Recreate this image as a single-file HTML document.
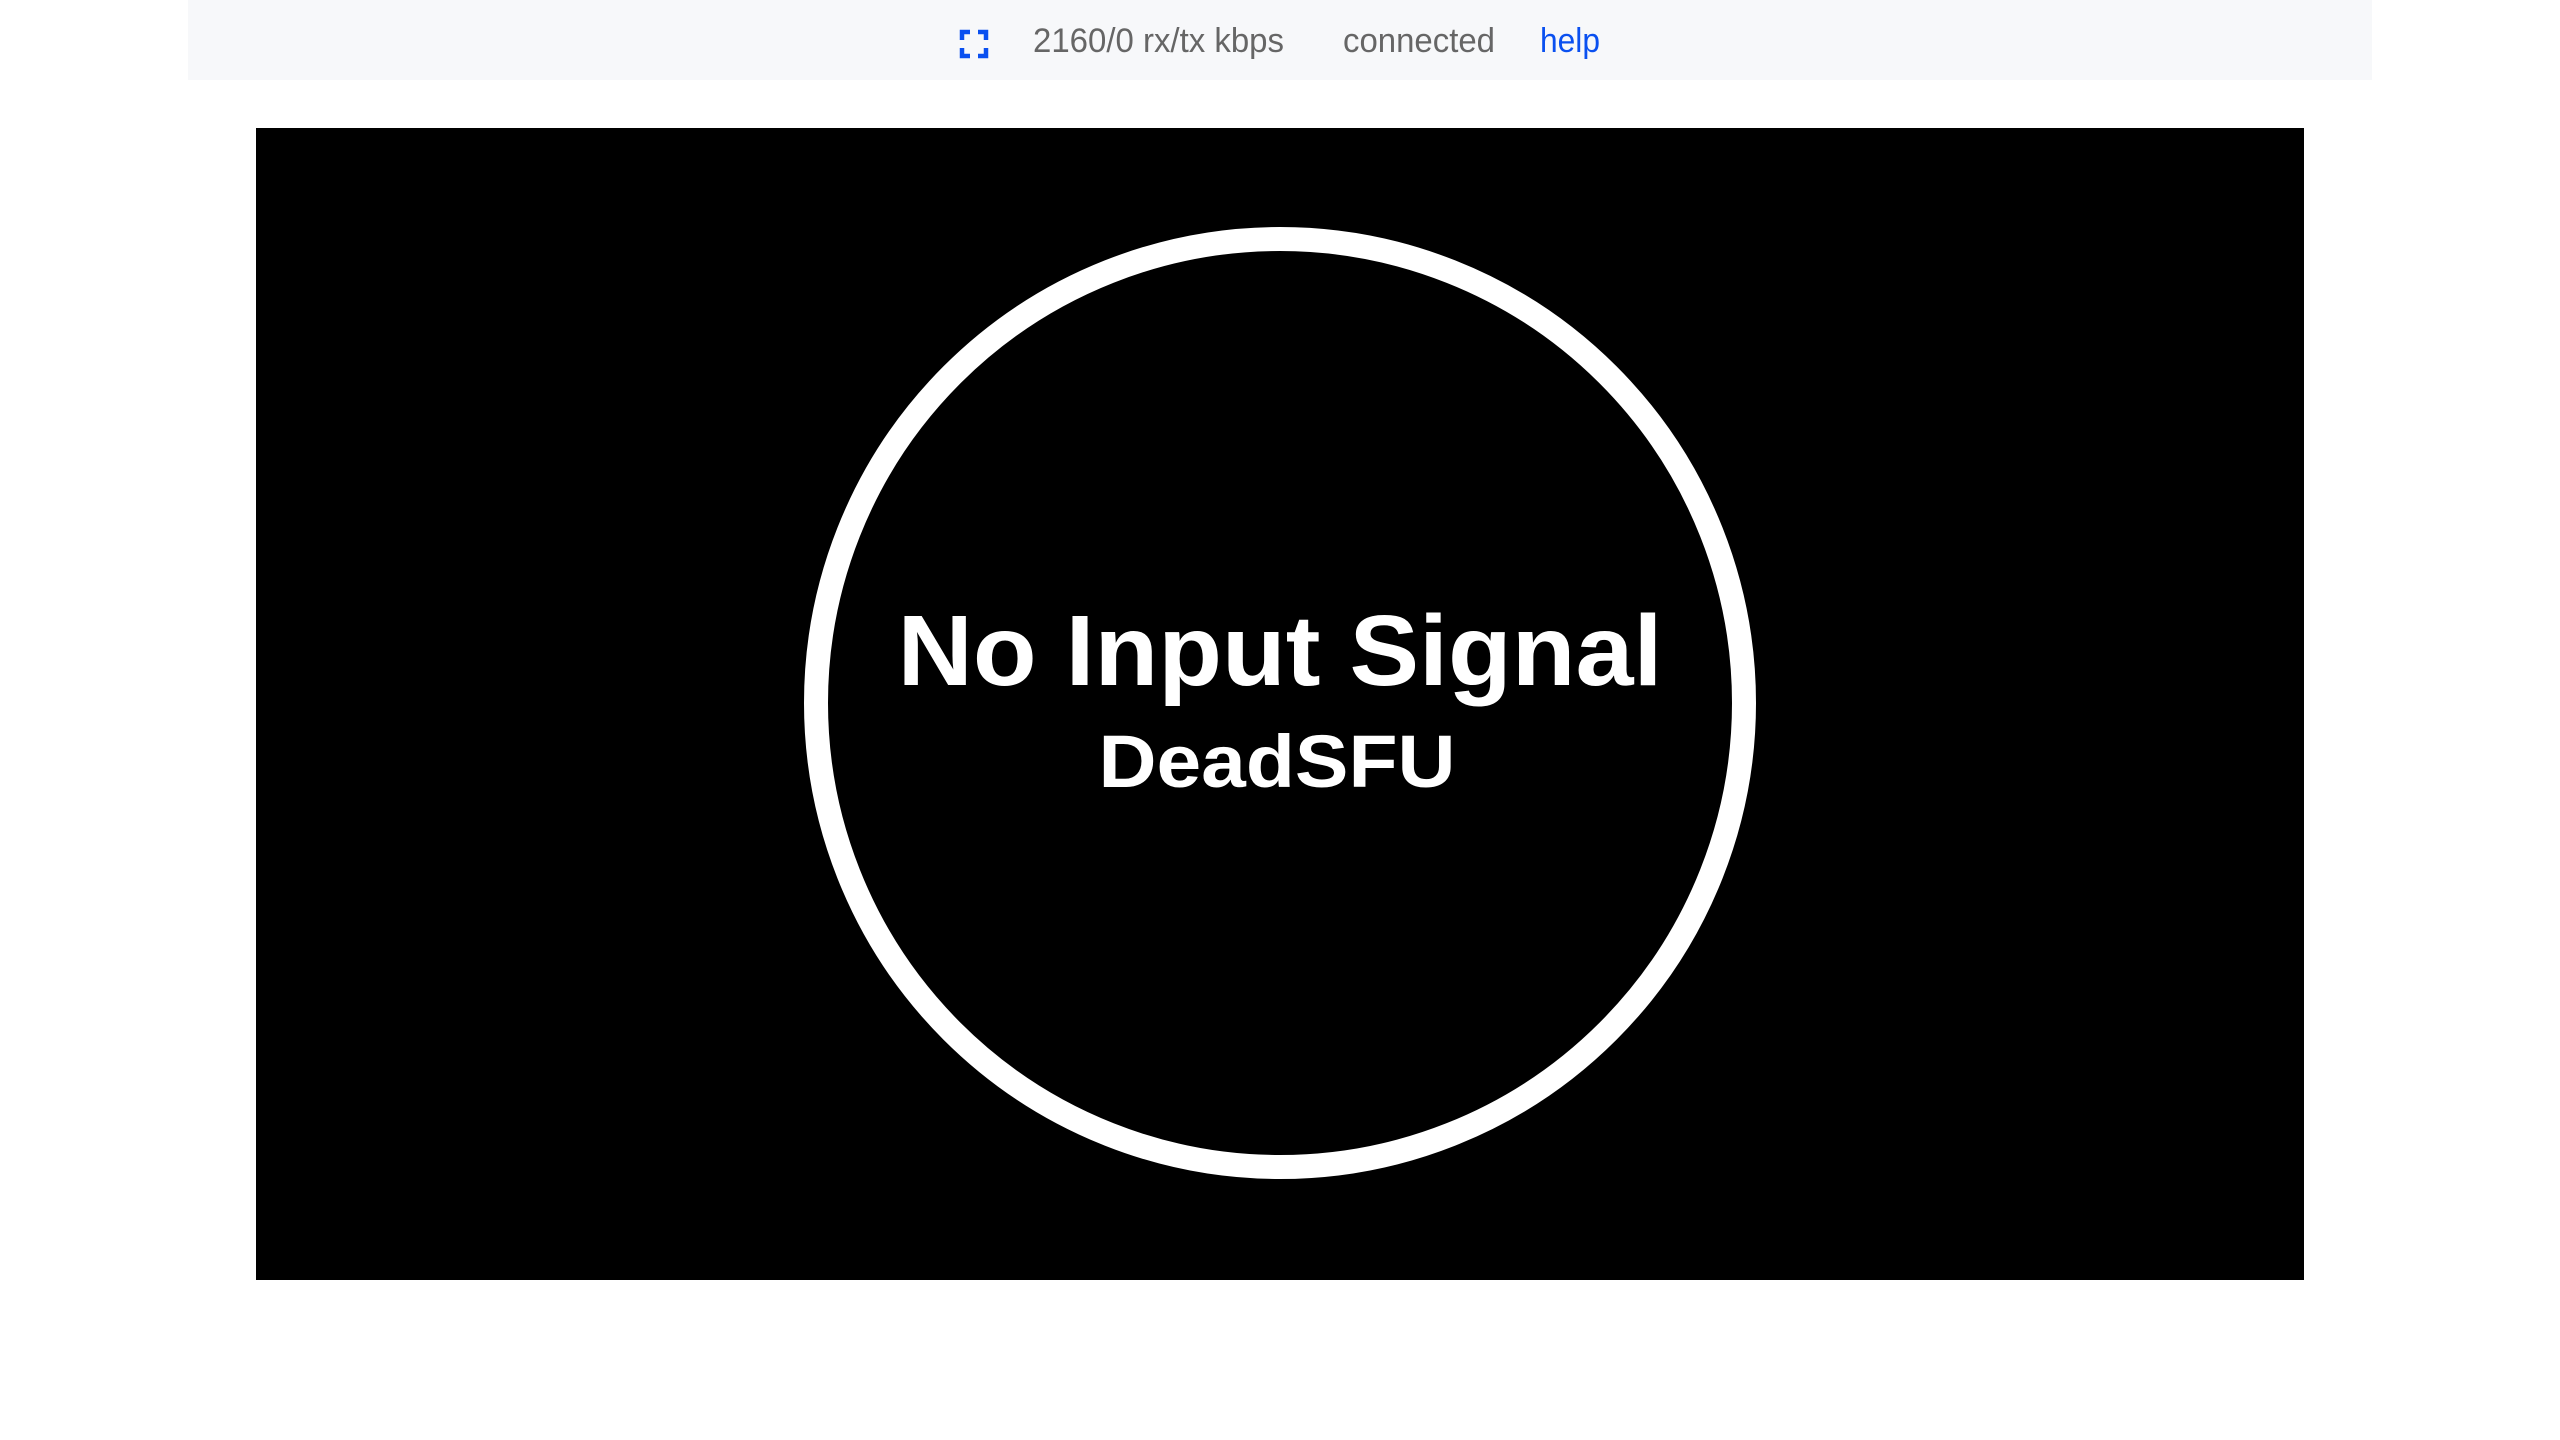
<!DOCTYPE html>
<html><head><meta charset="utf-8"><style>
html,body{margin:0;padding:0;background:#fff;width:2560px;height:1440px;overflow:hidden;font-family:"Liberation Sans",sans-serif}
.bar{position:absolute;left:188px;top:0;width:2184px;height:80px;background:#f7f8fa}
.video{position:absolute;left:256px;top:128px;width:2048px;height:1152px;background:#000}
</style></head><body>
<div class="bar"></div>
<svg style="position:absolute;left:0;top:0" width="2560" height="80" viewBox="0 0 2560 80">
<g fill="none" stroke="#0a50f0" stroke-width="4.5">
<path d="M962 40V32H970"/><path d="M978 32H986V40"/><path d="M962 48V56H970"/><path d="M978 56H986V48"/>
</g>
<g font-family="Liberation Sans, sans-serif" font-size="34" fill="#666">
<text x="1033" y="52" textLength="251" lengthAdjust="spacingAndGlyphs">2160/0 rx/tx kbps</text>
<text x="1343" y="52" textLength="152" lengthAdjust="spacingAndGlyphs">connected</text>
<text x="1540" y="52" textLength="60" lengthAdjust="spacingAndGlyphs" fill="#0a50f0">help</text>
</g>
</svg>
<div class="video">
<svg width="2048" height="1152" viewBox="0 0 2048 1152">
<circle cx="1024" cy="575" r="464" fill="none" stroke="#fff" stroke-width="24"/>
<text x="1024" y="557" text-anchor="middle" fill="#fff" font-family="Liberation Sans, sans-serif" font-weight="bold" font-size="100" textLength="765" lengthAdjust="spacingAndGlyphs">No Input Signal</text>
<text x="1021" y="659" text-anchor="middle" fill="#fff" font-family="Liberation Sans, sans-serif" font-weight="bold" font-size="74" textLength="357" lengthAdjust="spacingAndGlyphs">DeadSFU</text>
</svg>
</div>
</body></html>
